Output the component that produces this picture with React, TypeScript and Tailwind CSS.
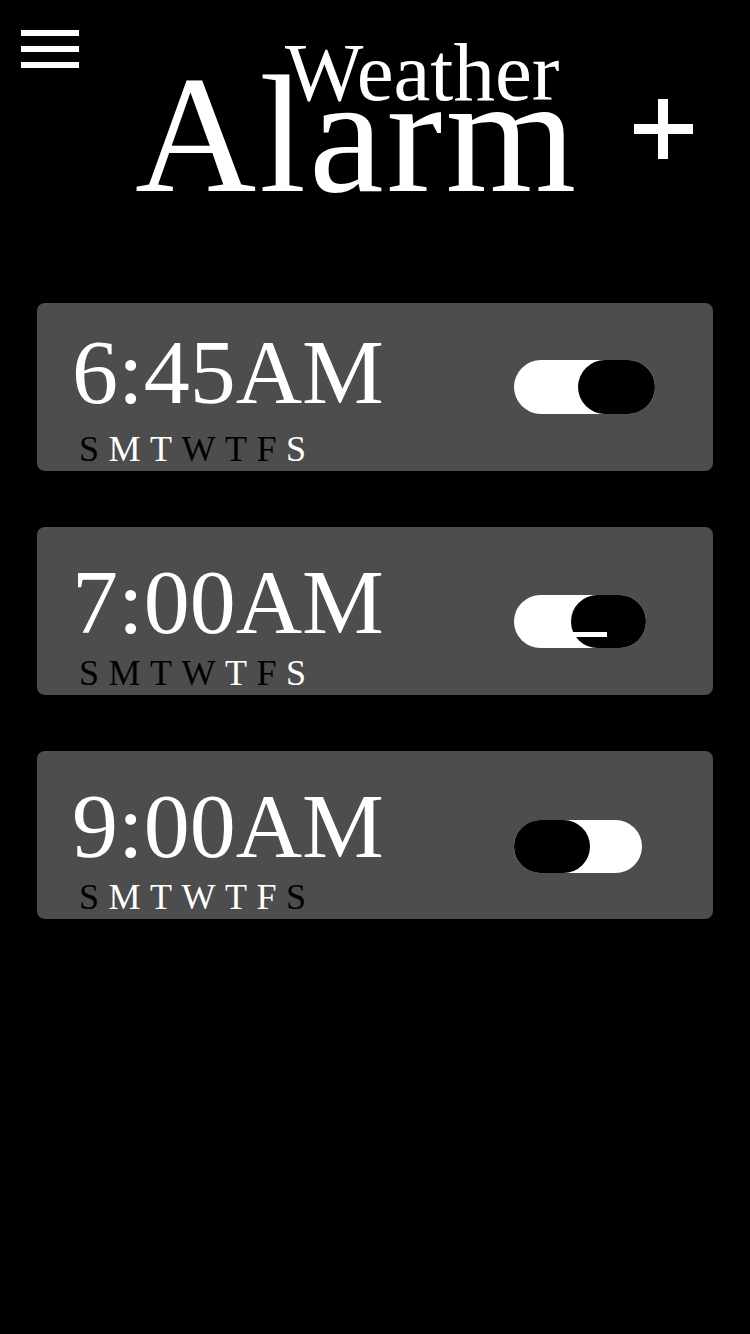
import React from "react";

type Alarm = {
  time: string;
  timeMt: string;
  daysMt: string;
  toggleMt: string;
  trackW: string;
  knobW: string;
  knobSide: "left" | "right";
  glitch?: boolean;
  days: boolean[];
};

const DAY_LETTERS = ["S", "M", "T", "W", "T", "F", "S"];

const alarms: Alarm[] = [
  {
    time: "6:45AM",
    timeMt: "mt-0",
    daysMt: "mt-[13px]",
    toggleMt: "mt-[57px]",
    trackW: "w-[141px] h-[54px]",
    knobW: "w-[77px] h-[54px]",
    knobSide: "right",
    days: [false, true, true, false, false, false, true],
  },
  {
    time: "7:00AM",
    timeMt: "mt-[6px]",
    daysMt: "mt-[7px]",
    toggleMt: "mt-[68px]",
    trackW: "w-[132px] h-[53px]",
    knobW: "w-[75px] h-[53px]",
    knobSide: "right",
    glitch: true,
    days: [false, false, false, false, true, false, true],
  },
  {
    time: "9:00AM",
    timeMt: "mt-[6px]",
    daysMt: "mt-[7px]",
    toggleMt: "mt-[69px]",
    trackW: "w-[128px] h-[53px]",
    knobW: "w-[76px] h-[53px]",
    knobSide: "left",
    days: [false, true, true, true, true, true, false],
  },
];

function Toggle({ a }: { a: Alarm }) {
  return (
    <div className={`relative shrink-0 rounded-full bg-white ${a.trackW} ${a.toggleMt}`}>
      <div
        className={`absolute top-0 rounded-full bg-black ${a.knobW} ${
          a.knobSide === "right" ? "right-0" : "left-0"
        }`}
      >
        {a.glitch && (
          <div className="absolute left-[1px] top-[37px] h-[5px] w-[35px] bg-white" />
        )}
      </div>
    </div>
  );
}

function AlarmCard({ a }: { a: Alarm }) {
  return (
    <div className="flex h-[168px] w-[676px] items-start rounded-[8px] bg-[#4d4d4d]">
      <div className="flex w-[477px] shrink-0 flex-col pt-[23px]">
        <div
          className={`ml-[21px] w-[340px] text-center text-[92px] leading-[92px] text-white ${a.timeMt}`}
        >
          {a.time}
        </div>
        <div className={`flex pl-[42px] text-[36px] leading-[36px] tracking-[9.5px] ${a.daysMt}`}>
          {DAY_LETTERS.map((d, i) => (
            <span key={i} className={a.days[i] ? "text-white" : "text-black"}>
              {d}
            </span>
          ))}
        </div>
      </div>
      <Toggle a={a} />
    </div>
  );
}

export default function App() {
  return (
    <div className="min-h-[1334px] w-[750px] bg-black font-['Liberation_Serif',serif] text-white">
      <header className="flex h-[303px] items-start">
        <button className="ml-[21px] mt-[30px] flex w-[58px] flex-col gap-[10px]" aria-label="Menu">
          <span className="block h-[6px] w-[58px] bg-white" />
          <span className="block h-[6px] w-[58px] bg-white" />
          <span className="block h-[6px] w-[58px] bg-white" />
        </button>
        <div className="ml-[56px] flex flex-col pt-[31px]">
          <div className="ml-[150px] text-[83px] leading-[83px]">Weather</div>
          <div className="mt-[-64px] text-[168px] leading-[168px] tracking-[3px]">Alarm</div>
        </div>
        <svg
          className="ml-auto mr-[57px] mt-[99px]"
          width="59"
          height="60"
          viewBox="0 0 59 60"
          aria-label="Add alarm"
        >
          <rect x="24" y="0" width="10" height="60" fill="#fff" />
          <rect x="0" y="25" width="59" height="10" fill="#fff" />
        </svg>
      </header>
      <main className="flex flex-col gap-[56px] pl-[37px]">
        {alarms.map((a, i) => (
          <AlarmCard key={i} a={a} />
        ))}
      </main>
    </div>
  );
}
